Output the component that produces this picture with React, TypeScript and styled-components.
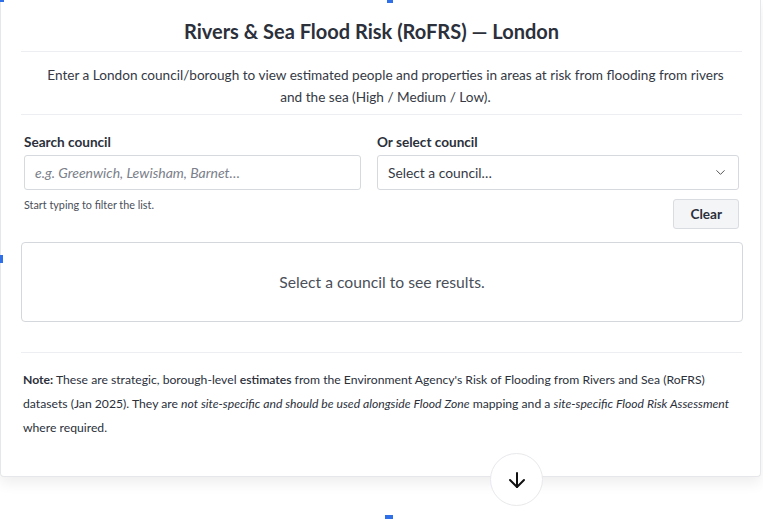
import styled, { createGlobalStyle } from 'styled-components';
import { ArrowDown, ChevronDown } from 'lucide-react';

const GlobalStyle = createGlobalStyle`
  html, body {
    margin: 0;
    padding: 0;
    background: #ffffff;
    font-family: Lato, "Noto Sans", sans-serif;
    color: #2b303b;
  }
`;

const Page = styled.div`
  position: relative;
  width: 763px;
  height: 519px;
  overflow: hidden;
`;

const Card = styled.div`
  width: 761px;
  box-sizing: border-box;
  border: 1px solid #e6e7ea;
  border-top: none;
  border-radius: 0 0 4px 4px;
  background: #fff;
  box-shadow: 0 6px 14px rgba(0, 0, 0, 0.07);
  padding: 15px 18px 36px 20px;
`;

const Title = styled.h1`
  margin: 0;
  text-align: center;
  font-size: 20px;
  font-weight: 700;
  color: #2b303b;
  line-height: 32px;
  padding: 0 20px 4px 0;
`;

const Divider = styled.hr`
  border: none;
  border-top: 1px solid #eceef1;
  margin: 0;
`;

const Intro = styled.p`
  margin: 0;
  padding: 12px 14px 6px 22px;
  text-align: center;
  font-size: 13.6px;
  line-height: 22px;
  color: #353a45;
`;

const Form = styled.div`
  display: grid;
  grid-template-columns: 337px 362px;
  column-gap: 16px;
  padding: 18px 0 0 3px;
`;

const Field = styled.div`
  display: flex;
  flex-direction: column;
`;

const Label = styled.label`
  font-size: 13.6px;
  font-weight: 700;
  color: #2b303b;
  line-height: 18px;
  margin-bottom: 4px;
`;

const Input = styled.input`
  box-sizing: border-box;
  height: 35px;
  width: 100%;
  border: 1px solid #d6d9de;
  border-radius: 3px;
  padding: 0 10px;
  font-family: inherit;
  font-size: 14px;
  color: #2b303b;
  &::placeholder {
    font-style: italic;
    color: #7b808a;
  }
`;

const SelectBox = styled.div`
  box-sizing: border-box;
  height: 35px;
  border: 1px solid #d6d9de;
  border-radius: 3px;
  padding: 0 10px;
  display: flex;
  align-items: center;
  justify-content: space-between;
  font-size: 13.8px;
  color: #353a45;
`;

const Hint = styled.div`
  font-size: 10.8px;
  line-height: 13px;
  color: #4a4f59;
  margin-top: 8px;
`;

const Actions = styled.div`
  display: flex;
  justify-content: flex-end;
  margin-top: 9px;
`;

const Button = styled.button`
  height: 30px;
  padding: 0 16px;
  background: #f4f5f7;
  border: 1px solid #d9dce1;
  border-radius: 3px;
  font-family: inherit;
  font-size: 13.6px;
  font-weight: 700;
  color: #2b303b;
`;

const Results = styled.div`
  margin-top: 13px;
  width: 722px;
  height: 80px;
  box-sizing: border-box;
  border: 1px solid #d4d7dc;
  border-radius: 4px;
  display: flex;
  align-items: center;
  justify-content: center;
  font-size: 15.7px;
  color: #4a4f59;
`;

const NoteDivider = styled(Divider)`
  margin-top: 30px;
`;

const Note = styled.p`
  margin: 0;
  padding: 15px 0 0 2px;
  font-size: 12.2px;
  line-height: 24px;
  color: #2b303b;
  b {
    font-weight: 700;
  }
  strong {
    font-weight: 600;
  }
`;

const ScrollButton = styled.button`
  position: absolute;
  left: 490px;
  top: 453px;
  width: 53px;
  height: 53px;
  border-radius: 50%;
  background: #fff;
  border: 1px solid #e8e9ec;
  display: flex;
  align-items: center;
  justify-content: center;
  padding: 0;
  color: #111;
`;

const Handle = styled.span<{ $x: number; $y: number; $w: number; $h: number }>`
  position: absolute;
  left: ${(p) => p.$x}px;
  top: ${(p) => p.$y}px;
  width: ${(p) => p.$w}px;
  height: ${(p) => p.$h}px;
  background: #2f6fe8;
`;

export default function App() {
  return (
    <Page>
      <GlobalStyle />
      <Card>
        <Title>Rivers &amp; Sea Flood Risk (RoFRS) — London</Title>
        <Divider />
        <Intro>
          Enter a London council/borough to view estimated people and properties in areas at risk from flooding from rivers
          and the sea (High / Medium / Low).
        </Intro>
        <Divider />
        <Form>
          <Field>
            <Label>Search council</Label>
            <Input placeholder="e.g. Greenwich, Lewisham, Barnet…" />
            <Hint>Start typing to filter the list.</Hint>
          </Field>
          <Field>
            <Label>Or select council</Label>
            <SelectBox>
              <span>Select a council…</span>
              <ChevronDown size={15} strokeWidth={1.6} color="#555" />
            </SelectBox>
            <Actions>
              <Button>Clear</Button>
            </Actions>
          </Field>
        </Form>
        <Results>Select a council to see results.</Results>
        <NoteDivider />
        <Note>
          <b>Note:</b> These are strategic, borough-level <strong>estimates</strong> from the Environment Agency's Risk of
          Flooding from Rivers and Sea (RoFRS) datasets (Jan 2025). They are{' '}
          <em>not site-specific and should be used alongside Flood Zone</em> mapping and a{' '}
          <em>site-specific Flood Risk Assessment</em> where required.
        </Note>
      </Card>
      <ScrollButton aria-label="Scroll down">
        <ArrowDown size={24} strokeWidth={2} />
      </ScrollButton>
      <Handle $x={0} $y={0} $w={4} $h={2} />
      <Handle $x={387} $y={0} $w={6} $h={3} />
      <Handle $x={0} $y={255} $w={3} $h={8} />
      <Handle $x={385} $y={515} $w={8} $h={4} />
    </Page>
  );
}
